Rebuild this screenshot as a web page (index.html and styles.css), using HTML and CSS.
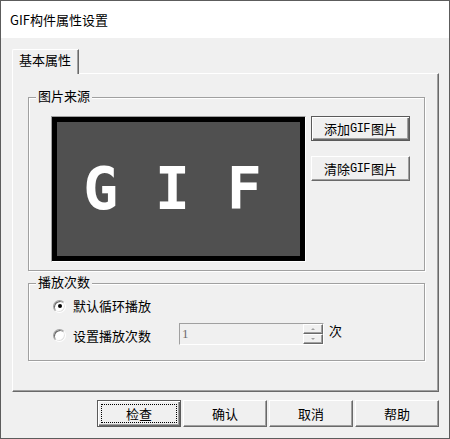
FILE: index.html
```html
<!DOCTYPE html>
<html lang="zh-CN">
<head>
<meta charset="utf-8">
<title>GIF构件属性设置</title>
<link rel="stylesheet" href="styles.css">
</head>
<body>
<div class="window">
  <div class="titlebar">GIF构件属性设置</div>
  <div class="client">
    <div class="tabs"><div class="tab">基本属性</div></div>
    <div class="panel">
      <div class="group group-src">
        <span class="legend">图片来源</span>
        <div class="gif-frame"><div class="gif-inner">G I F</div></div>
        <div class="btn-col">
          <button class="btn btn-side btn-default">添加<span class="lat">GIF</span>图片</button>
          <button class="btn btn-side">清除<span class="lat">GIF</span>图片</button>
        </div>
      </div>
      <div class="group group-play">
        <span class="legend">播放次数</span>
        <div class="row row-first">
          <span class="radio checked"></span>
          <span class="radio-label">默认循环播放</span>
        </div>
        <div class="row row-second">
          <span class="radio"></span>
          <span class="radio-label label-fixed">设置播放次数</span>
          <div class="spin">
            <div class="spin-val">1</div>
            <div class="spin-btns">
              <div class="spin-btn"><span class="arrow-up"></span></div>
              <div class="spin-btn"><span class="arrow-down"></span></div>
            </div>
          </div>
          <span class="unit">次</span>
        </div>
      </div>
    </div>
    <div class="footer">
      <button class="btn btn-foot btn-default btn-focus"><span class="focus">检查</span></button>
      <button class="btn btn-foot">确认</button>
      <button class="btn btn-foot">取消</button>
      <button class="btn btn-foot">帮助</button>
    </div>
  </div>
</div>
</body>
</html>
```
FILE: styles.css
```css
html, body {
  margin: 0;
  padding: 0;
  background: #ffffff;
}
body {
  font-family: "Noto Sans CJK SC", "Noto Sans", sans-serif;
  font-size: 13px;
  color: #000;
}
.window {
  width: 450px;
  height: 439px;
  box-sizing: border-box;
  border: 1px solid #5c5c5c;
  display: flex;
  flex-direction: column;
  background: #f0f0f0;
}
.titlebar {
  height: 37px;
  flex: none;
  background: #ffffff;
  display: flex;
  align-items: center;
  padding-left: 9px;
  font-size: 13px;
  line-height: 16px;
}
.client {
  flex: 1;
  padding: 11px 10px 0 11px;
  display: flex;
  flex-direction: column;
}
.tabs {
  display: flex;
  height: 25px;
  margin-bottom: -1px;
  position: relative;
  z-index: 1;
}
.tab {
  width: 67px;
  height: 25px;
  box-sizing: border-box;
  border-top: 1px solid #ffffff;
  border-left: 1px solid #ffffff;
  border-right: 1px solid #696969;
  border-top-left-radius: 2px;
  box-shadow: inset -1px 0 0 #a0a0a0;
  background: #f0f0f0;
  text-align: center;
  line-height: 20px;
  padding-right: 1px;
}
.panel {
  width: 427px;
  height: 319px;
  box-sizing: border-box;
  border-top: 1px solid #ffffff;
  border-left: 1px solid #ffffff;
  border-right: 1px solid #696969;
  border-bottom: 1px solid #696969;
  box-shadow: inset -1px -1px 0 #a0a0a0;
  padding: 23px 0 0 15px;
  display: flex;
  flex-direction: column;
}
.group {
  width: 397px;
  box-sizing: border-box;
  border: 1px solid #a0a0a0;
  box-shadow: 1px 1px 0 #ffffff, inset 1px 1px 0 #ffffff;
  position: relative;
}
.legend {
  position: absolute;
  top: -10px;
  left: 7px;
  padding: 0 2px;
  line-height: 16px;
  background: #f0f0f0;
}
.group-src {
  height: 174px;
  display: flex;
  align-items: flex-start;
  gap: 5px;
  padding: 18px 0 0 22px;
}
.gif-frame {
  width: 255px;
  height: 146px;
  box-sizing: border-box;
  border: 1px solid;
  border-color: #a0a0a0 #ffffff #ffffff #a0a0a0;
}
.gif-inner {
  height: 100%;
  box-sizing: border-box;
  border: 5px solid #000000;
  background: #505050;
  color: #ffffff;
  font-family: "DejaVu Sans Mono", monospace;
  font-weight: bold;
  font-size: 58px;
  letter-spacing: 1px;
  line-height: 1;
  white-space: pre;
  display: flex;
  align-items: center;
  justify-content: center;
  padding-right: 11px;
}
.btn-col {
  display: flex;
  flex-direction: column;
  gap: 15px;
}
.btn {
  appearance: none;
  margin: 0;
  padding: 0;
  font-family: "Noto Sans CJK SC", "Noto Sans", sans-serif;
  font-size: 13px;
  color: #000;
  background: #f0f0f0;
  box-sizing: border-box;
  border: 1px solid;
  border-color: #ffffff #696969 #696969 #ffffff;
  box-shadow: inset -1px -1px 0 #a0a0a0;
  display: flex;
  align-items: center;
  justify-content: center;
  line-height: 16px;
}
.btn-default {
  border-color: #5a5a5a;
  box-shadow: inset 1px 1px 0 #ffffff, inset -1px -1px 0 #696969, inset -2px -2px 0 #a0a0a0;
}
.btn-side {
  width: 99px;
  height: 25px;
}
.lat {
  font-family: "Liberation Mono", monospace;
  font-size: 12px;
  font-weight: normal;
  letter-spacing: -0.5px;
  margin-right: 1px;
}
.group-play {
  height: 78px;
  margin-top: 12px;
  padding: 14px 0 0 24px;
}
.row {
  display: flex;
  align-items: center;
}
.row-first {
  height: 16px;
}
.row-second {
  margin-top: 9px;
  height: 25px;
}
.radio {
  width: 13px;
  height: 13px;
  box-sizing: border-box;
  border-radius: 50%;
  border: 1px solid;
  border-color: #a0a0a0 #ffffff #ffffff #a0a0a0;
  box-shadow: inset 1px 1px 0 #696969, inset -1px -1px 0 #e3e3e3;
  background: #ffffff;
  display: flex;
  align-items: center;
  justify-content: center;
  flex: none;
}
.radio.checked::after {
  content: "";
  width: 4px;
  height: 4px;
  border-radius: 50%;
  background: #000;
}
.radio-label {
  margin-left: 7px;
  line-height: 16px;
}
.label-fixed {
  width: 106px;
}
.spin {
  align-self: flex-start;
  width: 145px;
  height: 22px;
  box-sizing: border-box;
  border: 1px solid;
  border-color: #a0a0a0 #ffffff #ffffff #a0a0a0;
  display: flex;
  background: #f0f0f0;
}
.spin-val {
  flex: 1;
  padding-left: 2px;
  color: #6d6d6d;
  font-family: "Liberation Serif", serif;
  font-size: 13px;
  line-height: 20px;
}
.spin-btns {
  width: 20px;
  display: flex;
  flex-direction: column;
}
.spin-btn {
  height: 10px;
  box-sizing: border-box;
  border: 1px solid;
  border-color: #ffffff #696969 #696969 #ffffff;
  box-shadow: inset -1px -1px 0 #a0a0a0;
  display: flex;
  align-items: center;
  justify-content: center;
}
.arrow-up {
  width: 0;
  height: 0;
  border-left: 2px solid transparent;
  border-right: 2px solid transparent;
  border-bottom: 2px solid #a0a0a0;
}
.arrow-down {
  width: 0;
  height: 0;
  border-left: 2px solid transparent;
  border-right: 2px solid transparent;
  border-top: 2px solid #a0a0a0;
}
.unit {
  margin-left: 5px;
  line-height: 16px;
  align-self: flex-start;
}
.footer {
  margin-top: 8px;
  display: flex;
  justify-content: flex-end;
  gap: 2px;
}
.btn-foot {
  width: 84px;
  height: 27px;
}
.btn-focus {
  padding: 3px;
}
.focus {
  flex: 1;
  align-self: stretch;
  border: 1px dotted #000;
  display: flex;
  align-items: center;
  justify-content: center;
}
```
